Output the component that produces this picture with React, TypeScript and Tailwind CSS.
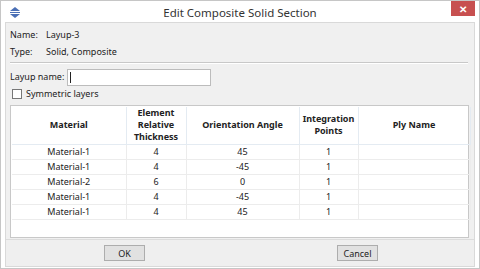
const layers = [
  { material: 'Material-1', thickness: 4, angle: 45, points: 1, ply: '' },
  { material: 'Material-1', thickness: 4, angle: -45, points: 1, ply: '' },
  { material: 'Material-2', thickness: 6, angle: 0, points: 1, ply: '' },
  { material: 'Material-1', thickness: 4, angle: -45, points: 1, ply: '' },
  { material: 'Material-1', thickness: 4, angle: 45, points: 1, ply: '' },
];

const AppIcon = () => (
  <svg width="12" height="11" viewBox="0 0 12 11">
    <polygon points="6,0 11,4 1,4" fill="#4a6fb5" />
    <rect x="1" y="5" width="10" height="1" fill="#4a6fb5" />
    <polygon points="1,7 11,7 6,11" fill="#4a6fb5" />
  </svg>
);

const App = () => {
  return (
    <div className="w-[480px] h-[269px] bg-white border border-[#c6c6c6] flex flex-col text-[9px] text-[#222] overflow-hidden" style={{ fontFamily: '"Noto Sans", "Open Sans", sans-serif' }}>
      {/* title bar */}
      <div className="relative h-[21px] shrink-0 flex items-center justify-center">
        <div className="absolute left-[8px] top-[6px]">
          <AppIcon />
        </div>
        <span className="text-[11.5px] text-[#333] mt-[3px]">Edit Composite Solid Section</span>
        <button className="absolute right-[4px] top-0 w-[24px] h-[15px] bg-[#c75050] flex items-center justify-center text-white text-[10px] font-bold leading-none">
          ✕
        </button>
      </div>

      {/* body */}
      <div className="mx-[4px] mb-[4px] flex-1 border border-[#d9d9d9] bg-[#f0f0f0] flex flex-col">
        <div className="px-[4px] pt-[3px] flex-1 flex flex-col">
          <div className="flex h-[17px] items-center">
            <span className="w-[36px]">Name:</span>
            <span>Layup-3</span>
          </div>
          <div className="flex h-[17px] items-center">
            <span className="w-[36px]">Type:</span>
            <span>Solid, Composite</span>
          </div>
          <div className="mt-[2px] h-[2px] border-t border-[#c8c8c8] border-b border-b-white mr-[2px]" />
          <div className="flex items-center mt-[4px] h-[18px]">
            <span className="w-[57px]">Layup name:</span>
            <div className="w-[144px] h-[17px] bg-white border border-[#bcbcbc] flex items-center pl-[2px]">
              <div className="w-px h-[11px] bg-[#222]" />
            </div>
          </div>
          <div className="flex items-center mt-[1px] h-[14px]">
            <div className="w-[10px] h-[10px] bg-white border border-[#777] ml-[2px] mr-[4px]" />
            <span>Symmetric layers</span>
          </div>
          <div className="mt-[4px] mr-[1px] h-[133px] bg-white border border-[#c8c8c8] p-px pr-[2px]">
            <table className="w-[458px] border-collapse text-center table-fixed">
              <colgroup>
                <col className="w-[114px]" />
                <col className="w-[60px]" />
                <col className="w-[113px]" />
                <col className="w-[59px]" />
                <col className="w-[112px]" />
              </colgroup>
              <thead>
                <tr className="h-[37px] font-bold leading-[12px]">
                  <th className="border-r border-b border-[#e4ebf2] font-bold">Material</th>
                  <th className="border-r border-b border-[#e4ebf2] font-bold">Element<br />Relative<br />Thickness</th>
                  <th className="border-r border-b border-[#e4ebf2] font-bold">Orientation Angle</th>
                  <th className="border-r border-b border-[#e4ebf2] font-bold">Integration<br />Points</th>
                  <th className="border-r border-b border-[#e4ebf2] font-bold">Ply Name</th>
                </tr>
              </thead>
              <tbody>
                {layers.map((l, i) => (
                  <tr key={i} className="h-[15px] leading-[14px]">
                    <td className="border-r border-b border-[#ececec]">{l.material}</td>
                    <td className="border-r border-b border-[#ececec]">{l.thickness}</td>
                    <td className="border-r border-b border-[#ececec]">{l.angle}</td>
                    <td className="border-r border-b border-[#ececec]">{l.points}</td>
                    <td className="border-r border-b border-[#ececec]">{l.ply}</td>
                  </tr>
                ))}
              </tbody>
            </table>
          </div>
        </div>
        <div className="h-[27px] mt-[1px] border-t border-[#dcdcdc] bg-[#efefef] flex items-center">
          <button className="ml-[98px] w-[41px] h-[16px] border border-[#adadad] bg-[#e1e1e1] text-[9px] leading-none">OK</button>
          <button className="ml-[192px] w-[41px] h-[16px] border border-[#adadad] bg-[#e1e1e1] text-[9px] leading-none">Cancel</button>
        </div>
      </div>
    </div>
  );
};

export default App;
